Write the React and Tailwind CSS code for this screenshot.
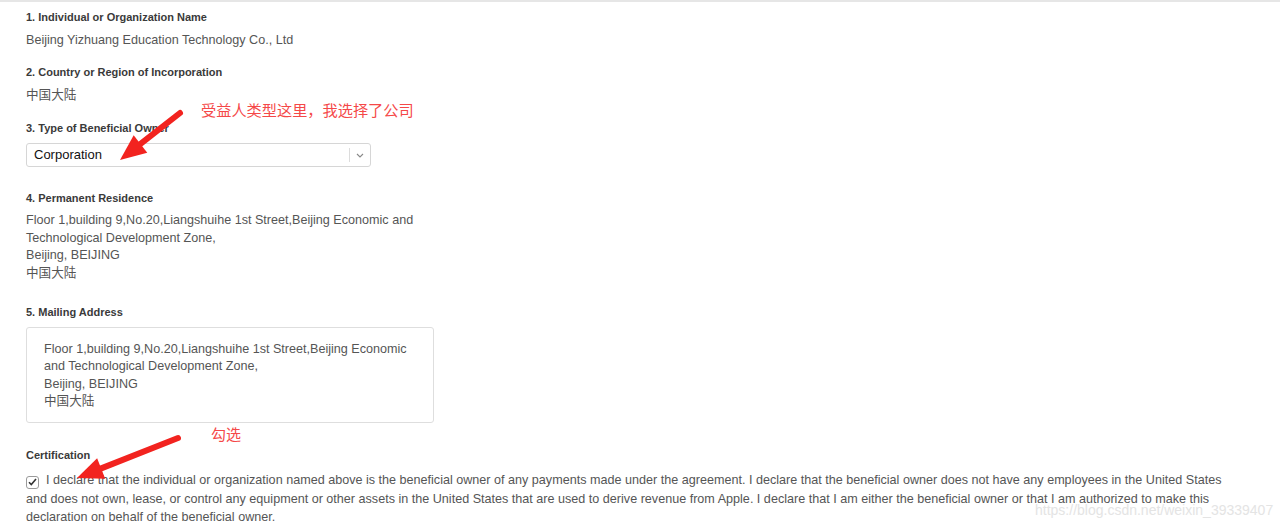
import React from "react"

const font = { fontFamily: '"Liberation Sans", Arial, "Noto Sans CJK SC", sans-serif' }

function Label({ children, className = "" }) {
  return <div className={`text-[11px] leading-4 font-bold text-[#3a3a3a] ${className}`}>{children}</div>
}

function Arrow({ x1, y1, x2, y2 }) {
  const dx = x2 - x1, dy = y2 - y1
  const len = Math.hypot(dx, dy)
  const ux = dx / len, uy = dy / len
  const hl = 26, hw = 11
  const bx = x2 - ux * hl, by = y2 - uy * hl
  const pts = `${x2},${y2} ${bx - uy * hw},${by + ux * hw} ${bx + uy * hw},${by - ux * hw}`
  return (
    <g>
      <line x1={x1} y1={y1} x2={bx + ux * 2} y2={by + uy * 2} stroke="#f2231f" strokeWidth="6" strokeLinecap="round" />
      <polygon points={pts} fill="#f2231f" />
    </g>
  )
}

export default function App() {
  return (
    <div className="relative w-[1280px] h-[525px] overflow-hidden bg-white border-t-2 border-[#e6e6e6]" style={font}>
      <div className="px-[26px] pt-[7px]">
        <Label>1. Individual or Organization Name</Label>
        <div className="mt-[6px] text-[12.6px] leading-[18px] text-[#555]">Beijing Yizhuang Education Technology Co., Ltd</div>

        <Label className="mt-[15px]">2. Country or Region of Incorporation</Label>
        <div className="mt-[6px] text-[12.6px] leading-[18px] text-[#555]">中国大陆</div>

        <Label className="mt-[16px]">3. Type of Beneficial Owner</Label>
        <div className="mt-[7px] w-[345px] h-[24px] flex items-center border border-[#d6d6d6] rounded-[3px] bg-white">
          <span className="flex-1 pl-[7px] text-[13px] text-[#111]">Corporation</span>
          <span className="w-px h-[14px] bg-[#dcdcdc]" />
          <span className="w-[20px] flex justify-center">
            <svg width="8" height="5" viewBox="0 0 8 5"><path d="M1 1l3 3 3-3" fill="none" stroke="#888" strokeWidth="1.1" /></svg>
          </span>
        </div>

        <Label className="mt-[23px]">4. Permanent Residence</Label>
        <div className="mt-[6px] text-[12.6px] leading-[17.5px] text-[#555]">
          <div>Floor 1,building 9,No.20,Liangshuihe 1st Street,Beijing Economic and</div>
          <div>Technological Development Zone,</div>
          <div>Beijing, BEIJING</div>
          <div>中国大陆</div>
        </div>

        <Label className="mt-[22px]">5. Mailing Address</Label>
        <div className="mt-[7px] w-[408px] h-[96px] border border-[#dedede] rounded-[3px] pl-[17px] pt-[13px] text-[12.6px] leading-[17.3px] text-[#555]">
          <div>Floor 1,building 9,No.20,Liangshuihe 1st Street,Beijing Economic</div>
          <div>and Technological Development Zone,</div>
          <div>Beijing, BEIJING</div>
          <div>中国大陆</div>
        </div>

        <Label className="mt-[24px]">Certification</Label>
        <div className="mt-[8px] w-[1212px] text-[12.6px] leading-[18.5px] text-[#555]">
          <span className="inline-flex align-[-2px] mr-[7px] w-[13px] h-[13px] border border-[#9a9a9a] rounded-[3px] items-center justify-center bg-white">
            <svg width="9" height="8" viewBox="0 0 9 8"><path d="M1 4.2l2.3 2.3L8 1" fill="none" stroke="#333" strokeWidth="1.6" /></svg>
          </span>
          I declare that the individual or organization named above is the beneficial owner of any payments made under the agreement. I declare that the beneficial owner does not have any employees in the United States and does not own, lease, or control any equipment or other assets in the United States that are used to derive revenue from Apple. I declare that I am either the beneficial owner or that I am authorized to make this declaration on behalf of the beneficial owner.
        </div>
      </div>

      {/* annotations */}
      <svg className="absolute left-0 top-0 pointer-events-none" width="1280" height="525">
        <Arrow x1={180} y1={111} x2={120} y2={158} />
        <Arrow x1={178} y1={436} x2={77} y2={476} />
      </svg>
      <div className="absolute left-[201px] top-[97px] text-[15.2px] leading-5 text-[#f54848]" style={{ fontFamily: '"Noto Sans CJK SC", sans-serif' }}>受益人类型这里，我选择了公司</div>
      <div className="absolute left-[211px] top-[422px] text-[15px] leading-5 text-[#f54848]" style={{ fontFamily: '"Noto Sans CJK SC", sans-serif' }}>勾选</div>
      <div className="absolute left-[1035px] top-[498px] text-[14px] leading-5 text-[#e4e4e4] [text-shadow:0_0_1px_#fff]" style={{ fontFamily: '"Liberation Sans", Arial, sans-serif' }}>https://blog.csdn.net/weixin_39339407</div>
    </div>
  )
}
